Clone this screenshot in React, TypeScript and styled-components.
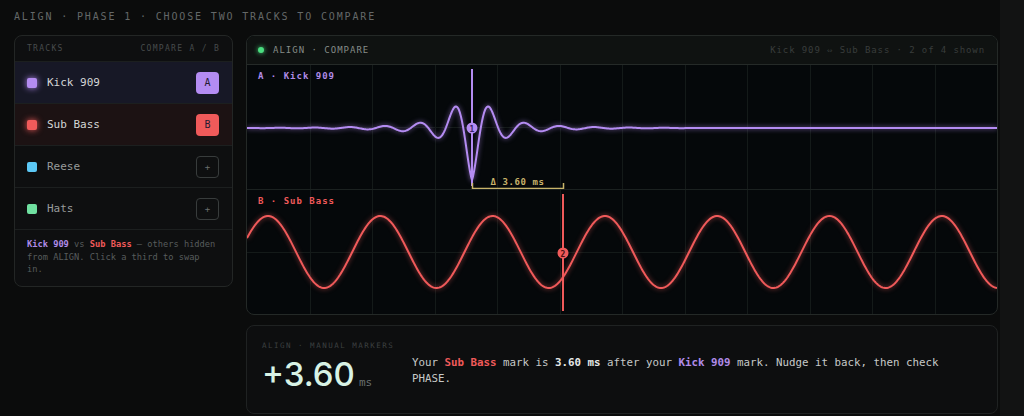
import { useMemo } from "react";
import { createGlobalStyle, styled } from "styled-components";

const colors = {
  page: "#0b0c0c",
  outside: "#121313",
  panel: "#0e0f10",
  border: "#232625",
  rowLine: "#1c1f1f",
  kick: "#b48cf2",
  kickText: "#b08be8",
  sub: "#f05a5a",
  reese: "#5cc8f5",
  hats: "#6fe0a0",
  grid: "#141a19",
  delta: "#c9b46a",
  mint: "#d8f2e5",
};

const MONO = `"DejaVu Sans Mono", "Liberation Mono", monospace`;

const LANE_W = 750;
const LANE_H = 124;
const MID = 62;

// marker positions along the lane, in px
const MARK_A = 225;
const MARK_B = 316;

const GlobalStyle = createGlobalStyle`
  html, body {
    margin: 0;
    background: ${colors.outside};
  }

  * {
    box-sizing: border-box;
  }
`;

type Track = {
  name: string;
  color: string;
  slot?: "A" | "B";
};

const tracks: Track[] = [
  { name: "Kick 909", color: colors.kick, slot: "A" },
  { name: "Sub Bass", color: colors.sub, slot: "B" },
  { name: "Reese", color: colors.reese },
  { name: "Hats", color: colors.hats },
];

// impulse of the kick: sharp dip at the transient with decaying ringing on both sides
const kickPath = () => {
  const pts: string[] = [];
  for (let x = 0; x <= LANE_W; x += 1) {
    const d = x - MARK_A;
    const a = 40 * Math.exp(-Math.abs(d) / 15) + 12 * Math.exp(-Math.abs(d) / 48);
    const y = MID + 1 + a * Math.cos((2 * Math.PI * d) / 35);
    pts.push(`${x === 0 ? "M" : "L"}${x},${y.toFixed(2)}`);
  }
  return pts.join(" ");
};

const subPath = () => {
  const pts: string[] = [];
  for (let x = 0; x <= LANE_W; x += 1) {
    const y = MID - 36 * Math.cos((2 * Math.PI * (x - 21)) / 112.3);
    pts.push(`${x === 0 ? "M" : "L"}${x},${y.toFixed(2)}`);
  }
  return pts.join(" ");
};

const Grid = () => (
  <g stroke={colors.grid} strokeWidth={1}>
    {Array.from({ length: 11 }, (_, i) => {
      const x = Math.round((i + 1) * 62.5) + 0.5;
      return <line key={i} x1={x} x2={x} y1={0} y2={LANE_H} />;
    })}
    <line x1={0} x2={LANE_W} y1={MID + 0.5} y2={MID + 0.5} />
  </g>
);

const Marker = ({ x, label, color, ink }: { x: number; label: string; color: string; ink: string }) => (
  <g>
    <line x1={x} x2={x} y1={4} y2={121} stroke={color} strokeWidth={2} />
    <circle cx={x} cy={MID + 1} r={5.5} fill={color} />
    <MarkerNum x={x} y={MID + 4.5} fill={ink} textAnchor="middle">
      {label}
    </MarkerNum>
  </g>
);

const App = () => {
  const kick = useMemo(kickPath, []);
  const sub = useMemo(subPath, []);

  return (
    <Page>
      <GlobalStyle />
      <Title>ALIGN · PHASE 1 · CHOOSE TWO TRACKS TO COMPARE</Title>
      <Layout>
        <TrackPanel>
          <TrackHeader>
            <span>TRACKS</span>
            <span>COMPARE A / B</span>
          </TrackHeader>
          {tracks.map((t) => (
            <TrackRow key={t.name} $slot={t.slot}>
              <Swatch $color={t.color} $glow={!!t.slot} />
              <TrackName $active={!!t.slot}>{t.name}</TrackName>
              {t.slot ? (
                <Badge $color={t.color}>{t.slot}</Badge>
              ) : (
                <AddButton>+</AddButton>
              )}
            </TrackRow>
          ))}
          <TrackNote>
            <Hl $color={colors.kickText}>Kick 909</Hl> vs <Hl $color={colors.sub}>Sub Bass</Hl> — others
            hidden from ALIGN. Click a third to swap in.
          </TrackNote>
        </TrackPanel>

        <MainColumn>
          <ComparePanel>
            <CompareHeader>
              <HeaderLeft>
                <LiveDot />
                <HeaderLabel>ALIGN · COMPARE</HeaderLabel>
              </HeaderLeft>
              <HeaderMeta>Kick 909 ⇔ Sub Bass · 2 of 4 shown</HeaderMeta>
            </CompareHeader>

            <Lane>
              <LaneSvg viewBox={`0 0 ${LANE_W} ${LANE_H}`} preserveAspectRatio="none">
                <Grid />
                <Wave d={kick} stroke={colors.kick} $glow="rgba(180,140,242,0.7)" />
                <Marker x={MARK_A} label="1" color={colors.kick} ink="#3a2466" />
                <g stroke={colors.delta} strokeWidth={1.5} fill="none">
                  <path d={`M${MARK_A + 0.5},118 V123.5 H${MARK_B + 0.5} V118`} />
                </g>
                <DeltaText x={(MARK_A + MARK_B) / 2} y={120} textAnchor="middle">
                  Δ 3.60 ms
                </DeltaText>
              </LaneSvg>
              <LaneLabel $color={colors.kickText}>A · Kick 909</LaneLabel>
            </Lane>

            <Lane>
              <LaneSvg viewBox={`0 0 ${LANE_W} ${LANE_H}`} preserveAspectRatio="none">
                <Grid />
                <Wave d={sub} stroke={colors.sub} $glow="rgba(240,90,90,0.65)" />
                <Marker x={MARK_B} label="2" color={colors.sub} ink="#4a1212" />
              </LaneSvg>
              <LaneLabel $color={colors.sub}>B · Sub Bass</LaneLabel>
            </Lane>
          </ComparePanel>

          <ResultPanel>
            <Readout>
              <ReadoutLabel>ALIGN · MANUAL MARKERS</ReadoutLabel>
              <ReadoutValue>
                +3.60<Unit>ms</Unit>
              </ReadoutValue>
            </Readout>
            <Message>
              Your <Hl $color={colors.sub}>Sub Bass</Hl> mark is <Hl $color="#e6e8e7">3.60 ms</Hl> after your{" "}
              <Hl $color={colors.kickText}>Kick 909</Hl> mark. Nudge it back, then check PHASE.
            </Message>
          </ResultPanel>
        </MainColumn>
      </Layout>
    </Page>
  );
};

const Page = styled.div`
  width: 1000px;
  min-height: 416px;
  padding: 11px 2px 0 14px;

  background: ${colors.page};
  font-family: ${MONO};
`;

const Title = styled.div`
  height: 12px;
  margin-bottom: 12px;

  font-size: 10px;
  line-height: 12px;
  letter-spacing: 1.85px;
  color: #646868;
`;

const Layout = styled.div`
  display: grid;
  grid-template-columns: 219px 752px;
  column-gap: 13px;
  align-items: start;
`;

const TrackPanel = styled.div`
  border: 1px solid ${colors.border};
  border-radius: 8px;

  background: ${colors.panel};
  overflow: hidden;
`;

const TrackHeader = styled.div`
  display: flex;
  justify-content: space-between;
  align-items: center;

  height: 25px;
  padding: 0 12px;

  font-size: 8px;
  letter-spacing: 1.3px;
  color: #474b4c;
`;

const TrackRow = styled.div<{ $slot?: "A" | "B" }>`
  display: flex;
  align-items: center;
  gap: 10px;

  height: 42px;
  padding: 0 13px 0 12px;

  border-top: 1px solid ${colors.rowLine};
  background: ${({ $slot }) => ($slot === "A" ? "#171826" : $slot === "B" ? "#1c1213" : "transparent")};
`;

const Swatch = styled.span<{ $color: string; $glow: boolean }>`
  width: 10px;
  height: 10px;

  border-radius: 2px;
  background: ${({ $color }) => $color};
  box-shadow: ${({ $color, $glow }) => ($glow ? `0 0 6px ${$color}` : "none")};
`;

const TrackName = styled.span<{ $active: boolean }>`
  flex: 1;

  font-size: 11px;
  color: ${({ $active }) => ($active ? "#d4d6d6" : "#989b9b")};
`;

const Badge = styled.span<{ $color: string }>`
  display: flex;
  align-items: center;
  justify-content: center;

  width: 23px;
  height: 22px;

  border-radius: 4px;
  background: ${({ $color }) => $color};

  font-size: 10px;
  color: #241a33;
`;

const AddButton = styled.span`
  display: flex;
  align-items: center;
  justify-content: center;

  width: 23px;
  height: 22px;

  border: 1px solid #383c3c;
  border-radius: 4px;

  font-size: 9px;
  color: #6c7070;
`;

const TrackNote = styled.div`
  padding: 8px 12px 10px;
  border-top: 1px solid ${colors.rowLine};

  font-size: 8.7px;
  line-height: 12.5px;
  color: #575c5c;
`;

const Hl = styled.b<{ $color: string }>`
  font-weight: 700;
  color: ${({ $color }) => $color};
`;

const MainColumn = styled.div`
  display: flex;
  flex-direction: column;
  gap: 10px;
`;

const ComparePanel = styled.div`
  border: 1px solid #242927;
  border-radius: 8px;

  background: #05080a;
  overflow: hidden;
`;

const CompareHeader = styled.div`
  display: flex;
  justify-content: space-between;
  align-items: center;

  height: 29px;
  padding: 0 12px 0 11px;

  border-bottom: 1px solid #252a28;
  background: #0f1211;
`;

const HeaderLeft = styled.div`
  display: flex;
  align-items: center;
  gap: 9px;
`;

const LiveDot = styled.span`
  width: 6px;
  height: 6px;

  border-radius: 50%;
  background: #4ade80;
  box-shadow: 0 0 5px #4ade80;
`;

const HeaderLabel = styled.span`
  font-size: 9px;
  letter-spacing: 1px;
  color: #858c88;
`;

const HeaderMeta = styled.span`
  font-size: 9px;
  letter-spacing: 0.9px;
  color: #393d3c;
`;

const Lane = styled.div`
  position: relative;

  height: ${LANE_H}px;
  padding: 6px 11px;

  & + & {
    height: ${LANE_H + 1}px;
    border-top: 1px solid #1b2120;
  }
`;

const LaneSvg = styled.svg`
  position: absolute;
  left: 0;
  bottom: 0;

  width: ${LANE_W}px;
  height: ${LANE_H}px;
  overflow: visible;
`;

const LaneLabel = styled.div<{ $color: string }>`
  position: relative;

  font-size: 9px;
  line-height: 11px;
  font-weight: 700;
  letter-spacing: 1px;
  color: ${({ $color }) => $color};
`;

const Wave = styled.path<{ $glow: string }>`
  fill: none;
  stroke-width: 2;
  stroke-linejoin: round;
  filter: drop-shadow(0 0 2.5px ${({ $glow }) => $glow});
`;

const MarkerNum = styled.text`
  font-family: ${MONO};
  font-size: 8px;
  font-weight: 700;
`;

const DeltaText = styled.text`
  font-family: ${MONO};
  font-size: 9px;
  font-weight: 700;
  letter-spacing: 0.6px;
  fill: ${colors.delta};
`;

const ResultPanel = styled.div`
  display: flex;
  align-items: center;

  height: 89px;
  padding: 3px 15px 0;

  border: 1px solid #1f2222;
  border-radius: 8px;
  background: #0d0e0f;
`;

const Readout = styled.div`
  display: flex;
  flex-direction: column;
  gap: 5px;

  width: 150px;
  flex-shrink: 0;
`;

const ReadoutLabel = styled.div`
  font-size: 7.5px;
  line-height: 10px;
  letter-spacing: 1.5px;
  color: #3c4040;
`;

const ReadoutValue = styled.div`
  display: flex;
  align-items: baseline;

  font-family: Inter, "Noto Sans", sans-serif;
  font-size: 33px;
  line-height: 36px;
  font-weight: 500;
  letter-spacing: 0;
  color: ${colors.mint};
`;

const Unit = styled.span`
  margin-left: 4px;

  font-family: ${MONO};
  font-size: 11px;
  letter-spacing: 0;
  color: #6a7070;
`;

const Message = styled.div`
  max-width: 545px;

  font-size: 10.8px;
  line-height: 16px;
  color: #c6c9c8;
`;

export default App;
